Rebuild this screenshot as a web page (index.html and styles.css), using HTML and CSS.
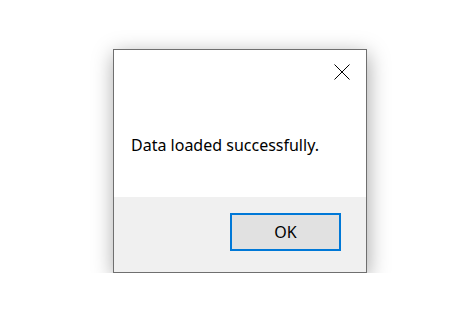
FILE: index.html
```html
<!DOCTYPE html>
<html lang="en">
<head>
    <meta charset="UTF-8">
    <meta name="viewport" content="width=device-width, initial-scale=1.0">
    <title>Message</title>
    <link rel="stylesheet" href="styles.css">
</head>
<body>
    <div class="dialog">
        <div class="dialog-body">
            <div class="title-bar">
                <button class="close-button" aria-label="Close">
                    <svg width="16" height="16" viewBox="0 0 16 16">
                        <path d="M0.5 0.5 L15.5 15.5 M15.5 0.5 L0.5 15.5" stroke="#000" stroke-width="1" fill="none"/>
                    </svg>
                </button>
            </div>
            <p class="message">Data loaded successfully.</p>
        </div>
        <div class="dialog-footer">
            <button class="ok-button">OK</button>
        </div>
    </div>
</body>
</html>
```

FILE: styles.css
```css
body {
    font-family: "Noto Sans", "Open Sans", sans-serif;
    background-color: white;
    margin: 0;
    padding: 49px 0 0 113px;
}

.dialog {
    width: 254px;
    height: 224px;
    box-sizing: border-box;
    border: 1px solid #6f6f6f;
    background-color: white;
    box-shadow: 1px 5px 20px rgba(0, 0, 0, 0.35);
    display: flex;
    flex-direction: column;
}

.dialog-body {
    height: 147px;
    padding: 0 16px 0 17px;
}

.title-bar {
    display: flex;
    justify-content: flex-end;
    padding-top: 14px;
}

.close-button {
    background: none;
    border: none;
    padding: 0;
    width: 16px;
    height: 16px;
    display: block;
    cursor: pointer;
}

.close-button svg {
    display: block;
}

.message {
    margin: 54px 0 0 0;
    font-size: 16px;
    color: #000;
    line-height: 22px;
}

.dialog-footer {
    flex: 1;
    background-color: #f0f0f0;
    display: flex;
    justify-content: flex-end;
    align-items: flex-start;
    padding: 16px 25px 0 0;
}

.ok-button {
    width: 111px;
    height: 38px;
    box-sizing: border-box;
    border: 2px solid #0078d7;
    background-color: #e1e1e1;
    font-family: "Noto Sans", "Open Sans", sans-serif;
    font-size: 16px;
    color: #000;
    padding: 0;
    cursor: pointer;
}
```
